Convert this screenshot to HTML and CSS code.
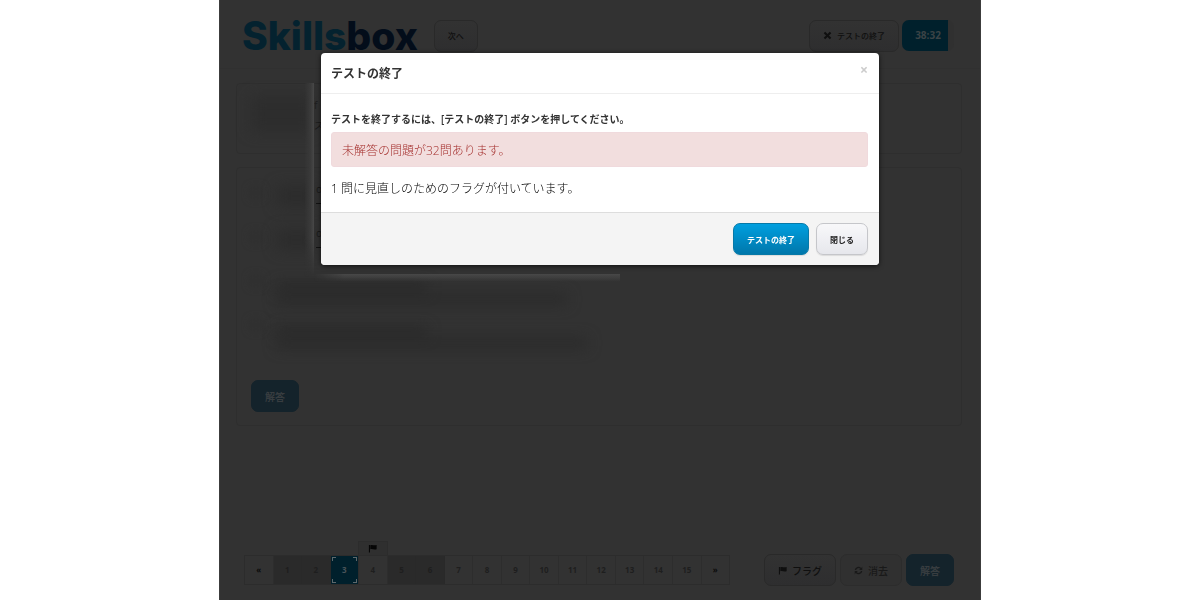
FILE: index.html
```html
<!DOCTYPE html>
<html lang="ja">
<head>
<meta charset="utf-8">
<meta name="viewport" content="width=device-width, initial-scale=1">
<title>Skillsbox</title>
<link rel="stylesheet" href="styles.css">
</head>
<body>
<div class="page">
  <header class="topbar">
    <div class="brand"><span class="brand-blue">Skills</span><span class="brand-navy">box</span></div>
    <button class="btn small" type="button">次へ</button>
    <div class="topbar-end">
      <button class="btn small" type="button">
        <svg class="icon" viewBox="0 0 10 10"><path d="M2.4.8 5 3.4 7.6.8 9.2 2.4 6.6 5l2.6 2.6-1.6 1.6L5 6.6 2.4 9.2.8 7.6 3.4 5 .8 2.4z"/></svg>テストの終了</button>
      <div class="timer"><span class="timer-value">38:32</span></div>
    </div>
  </header>

  <main class="content">
    <section class="panel question">
      <div class="haze haze-wide"></div>
      <div class="peek"><span>f</span><span>ズ</span></div>
    </section>
    <section class="panel answers">
      <ul class="options">
        <li class="option"><i class="dot"></i><i class="haze haze-a"></i><span class="peek-mark">of</span></li>
        <li class="option"><i class="dot"></i><i class="haze haze-a"></i><span class="peek-mark">on</span></li>
        <li class="option"><i class="dot"></i><span class="lines"><i class="haze haze-b"></i><i class="haze haze-c"></i></span></li>
        <li class="option"><i class="dot"></i><span class="lines"><i class="haze haze-b"></i><i class="haze haze-d"></i></span></li>
      </ul>
      <button class="btn muted-primary" type="button">解答</button>
    </section>
    <div class="glow glow-side"></div>
    <div class="glow glow-bottom"></div>
  </main>

  <footer class="bottombar">
    <nav class="pager" aria-label="問題">
      <a class="cell arrow" href="#">«</a>
      <a class="cell done" href="#">1</a>
      <a class="cell done" href="#">2</a>
      <a class="cell current" href="#" aria-current="page"><i class="corners"></i>3</a>
      <a class="cell" href="#"><span class="tab"><svg class="icon" viewBox="0 0 10 10"><path d="M1 1h1.2v8.5H1zM2.6 1.3c2-1 3.4.9 7-.1v4.6c-3.200 1-5-.9-7 .1z"/></svg></span>4</a>
      <a class="cell done" href="#">5</a>
      <a class="cell done" href="#">6</a>
      <a class="cell" href="#">7</a>
      <a class="cell" href="#">8</a>
      <a class="cell" href="#">9</a>
      <a class="cell" href="#">10</a>
      <a class="cell" href="#">11</a>
      <a class="cell" href="#">12</a>
      <a class="cell" href="#">13</a>
      <a class="cell" href="#">14</a>
      <a class="cell" href="#">15</a>
      <a class="cell arrow" href="#">»</a>
    </nav>
    <div class="actions">
      <button class="btn" type="button"><svg class="icon" viewBox="0 0 10 10"><path d="M1 1h1.200v8.500H1zM2.600 1.300c2-1 3.400.9 7-.1v4.600c-3.200 1-5-.9-7 .1z"/></svg>フラグ</button>
      <button class="btn faded" type="button"><svg class="icon" viewBox="0 0 10 10"><path d="M.8 4.500A4.200 4.200 0 0 1 8 2.100L9.200.9v3.500H5.700L7 3.100A2.800 2.800 0 0 0 2.300 4.500zM9.200 5.500A4.200 4.200 0 0 1 2 7.900L.8 9.100V5.600h3.500L3 6.900a2.800 2.800 0 0 0 4.700-1.400z"/></svg>消去</button>
      <button class="btn muted-primary" type="button">解答</button>
    </div>
  </footer>
</div>

<div class="modal" role="dialog" aria-labelledby="modal-title">
  <div class="modal-header">
    <h3 class="modal-title" id="modal-title">テストの終了</h3>
    <button class="close" type="button" aria-label="Close">×</button>
  </div>
  <div class="modal-body">
    <p class="lead">テストを終了するには、[テストの終了] ボタンを押してください。</p>
    <div class="alert">未解答の問題が32問あります。</div>
    <p class="note">1 問に見直しのためのフラグが付いています。</p>
  </div>
  <div class="modal-footer">
    <button class="modal-btn primary" type="button">テストの終了</button>
    <button class="modal-btn" type="button">閉じる</button>
  </div>
</div>
</body>
</html>
```
FILE: styles.css
```css
* { box-sizing: border-box; }
body {
  margin: 0;
  background: #fff;
  font-family: "Open Sans", "Noto Sans CJK JP", sans-serif;
  font-size: 12px;
  line-height: 18px;
  color: #333;
}
button { font-family: inherit; cursor: pointer; }
p, h3, ul { margin: 0; padding: 0; }

.page {
  display: flex;
  flex-direction: column;
  width: 63.5%;
  min-height: 100vh;
  margin: 0 auto;
  background: #323232;
  border-left: 1px solid #3c3c3c;
  border-right: 1px solid #3c3c3c;
}

.topbar {
  display: flex;
  align-items: center;
  gap: 16px;
  height: 69px;
  padding: 3px 26px 0 22px;
  border-bottom: 1px solid #303030;
}
.brand {
  font-family: Inter, sans-serif;
  font-size: 39px;
  font-weight: 800;
  line-height: 40px;
}
.brand-blue { color: #04222f; }
.brand-navy { color: #030d1a; }
.topbar-end { display: flex; gap: 3px; margin-left: auto; }

.btn {
  display: inline-flex;
  align-items: center;
  justify-content: center;
  gap: 5px;
  height: 32px;
  padding: 0 13px;
  border: 1px solid #292929;
  border-radius: 7px;
  background: linear-gradient(#323232, #2e2e2f);
  color: #0f0f0f;
  font-size: 10px;
  font-weight: 500;
}
.small { font-size: 8px; }
.faded { background: #303030; border-color: #2c2c2c; color: #191919; }
.muted-primary { background: #14232b; border-color: #14232b; color: #383d40; font-weight: 700; }
.icon { width: 9px; height: 9px; fill: currentColor; }

.timer {
  width: 52px;
  height: 31px;
  padding-right: 6px;
  border-radius: 7px;
  background: #303030;
}
.timer-value {
  display: block;
  padding-left: 6px;
  border-radius: 7px 0 0 7px;
  background: #00202c;
  color: #3b4346;
  font-size: 10px;
  font-weight: 700;
  line-height: 31px;
  text-align: center;
}

.content { position: relative; flex: 1; padding: 14px 18px 0 16px; }
.panel { border: 1px solid #2e2e2e; border-radius: 4px; }
.question { display: flex; height: 71px; padding: 12px 14px; margin-bottom: 13px; }
.peek { display: grid; gap: 2px; font-size: 10px; color: #151515; align-content: start; }
.answers { padding: 12px 14px 13px; }
.options { list-style: none; margin-bottom: 24px; }
.option { display: flex; gap: 16px; height: 44px; }
.haze { display: block; filter: blur(7px); }
.haze-wide { width: 63px; height: 36px; background: #2d2d2d; }
.haze-a { width: 39px; height: 20px; margin: 6px -16px 0 0; background: #2c2c2c; }
.haze-b { width: 150px; height: 8px; background: #272727; }
.haze-c { width: 290px; height: 10px; background: #2a2a2a; }
.haze-d { width: 310px; height: 10px; background: #2a2a2a; }
.lines { display: grid; gap: 2px; padding-top: 16px; align-content: start; }
.dot { width: 10px; height: 10px; margin-top: 8px; background: #2f2f2f; filter: blur(4px); }
.peek-mark { height: 24px; border-bottom: 1px solid #0a0a0a; color: #111; font-size: 10px; }
.glow { position: absolute; }
.glow-side {
  left: 84px; top: 14px; width: 10px; height: 194px;
  background: linear-gradient(90deg, transparent, #3b3b3b 70%, #484848);
  -webkit-mask-image: linear-gradient(#000 80%, transparent);
  mask-image: linear-gradient(#000 80%, transparent);
}
.glow-bottom {
  left: 94px; top: 205px; width: 306px; height: 8px;
  background: linear-gradient(#484848, transparent);
  -webkit-mask-image: linear-gradient(90deg, transparent, #000 10%);
  mask-image: linear-gradient(90deg, transparent, #000 10%);
}

.bottombar {
  display: flex;
  align-items: center;
  justify-content: space-between;
  padding: 0 26px 14px 24px;
}
.pager { display: flex; width: 486px; border: 1px solid #2c2c2c; }
.cell {
  position: relative;
  flex: 1 1 0;
  height: 28px;
  border-right: 1px solid #2d2d2d;
  color: #1e1e1e;
  font-size: 8px;
  font-weight: 700;
  line-height: 28px;
  text-align: center;
  text-decoration: none;
}
.cell:last-child { border-right: 0; }
.arrow { color: #0a0a0a; }
.done { background: #2a2a2a; border-color: #292929; }
.current { background: #00202c; color: #4a5459; }
.corners {
  position: absolute;
  inset: 1px;
  --c: #5d686c;
  background:
    linear-gradient(var(--c), var(--c)) 0 0 / 4px 1px,
    linear-gradient(var(--c), var(--c)) 0 0 / 1px 4px,
    linear-gradient(var(--c), var(--c)) 100% 0 / 4px 1px,
    linear-gradient(var(--c), var(--c)) 100% 0 / 1px 4px,
    linear-gradient(var(--c), var(--c)) 0 100% / 4px 1px,
    linear-gradient(var(--c), var(--c)) 0 100% / 1px 4px,
    linear-gradient(var(--c), var(--c)) 100% 100% / 4px 1px,
    linear-gradient(var(--c), var(--c)) 100% 100% / 1px 4px;
  background-repeat: no-repeat;
}
.tab {
  position: absolute;
  left: -1px;
  right: -1px;
  bottom: 100%;
  display: flex;
  align-items: center;
  justify-content: center;
  height: 15px;
  border: 1px solid #2c2c2c;
  background: #2f2f2f;
  color: #050505;
}
.actions { display: flex; gap: 4px; }

.modal {
  position: fixed;
  top: 53px;
  left: 50%;
  width: 558px;
  max-width: 100%;
  transform: translateX(-50%);
  border-radius: 4px;
  background: #fff;
  box-shadow: 0 1px 5px rgba(0, 0, 0, .7);
  overflow: hidden;
}
.modal-header {
  display: flex;
  align-items: center;
  justify-content: space-between;
  padding: 12px 11px 10px 10px;
  border-bottom: 1px solid #eee;
}
.modal-title { font-size: 12px; line-height: 18px; font-weight: 700; }
.close {
  padding: 0;
  border: 0;
  background: none;
  color: #ccc;
  font-size: 14px;
  font-weight: 700;
  line-height: 10px;
  margin-bottom: 8px;
}
.modal-body { padding: 17px 11px 14px 10px; }
.lead { margin-bottom: 5px; font-size: 10px; line-height: 16px; font-weight: 600; }
.alert {
  margin-bottom: 13px;
  padding: 9px 10px 6px;
  border: 1px solid #f0dadd;
  border-radius: 3px;
  background: #f2dede;
  color: #a5302e;
  font-weight: 300;
  line-height: 18px;
}
.note { color: #000; font-weight: 300; line-height: 18px; }
.modal-footer {
  display: flex;
  justify-content: flex-end;
  gap: 7px;
  padding: 10px 11px 10px 10px;
  border-top: 1px solid #ddd;
  background: #f4f4f4;
}
.modal-btn {
  height: 32px;
  padding: 0 13px;
  border: 1px solid #c5c6ca;
  border-radius: 7px;
  background: linear-gradient(#f8f8fa, #e6e7ec);
  box-shadow: 0 1px 1px rgba(0, 0, 0, .1);
  color: #222;
  font-size: 8px;
  font-weight: 700;
}
.primary {
  border-color: #0679a8;
  background: linear-gradient(#009fdf, #0077ab);
  color: #fff;
}
```
